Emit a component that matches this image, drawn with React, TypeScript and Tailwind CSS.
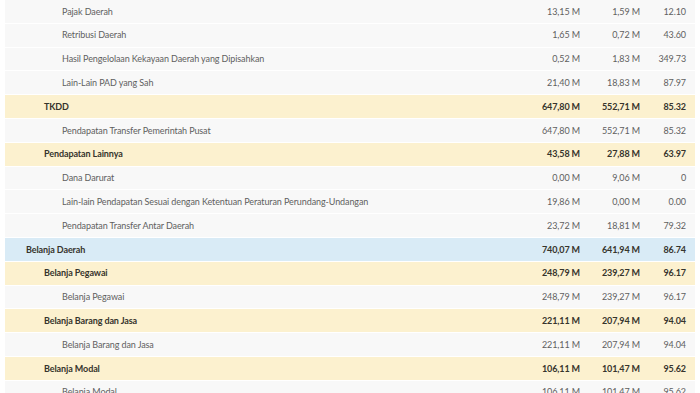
import React from "react";

type Row = {
  name: string;
  level: 1 | 2 | 3;
  a: string;
  b: string;
  p: string;
};

const rows: Row[] = [
  { name: "Pajak Daerah", level: 3, a: "13,15 M", b: "1,59 M", p: "12.10" },
  { name: "Retribusi Daerah", level: 3, a: "1,65 M", b: "0,72 M", p: "43.60" },
  { name: "Hasil Pengelolaan Kekayaan Daerah yang Dipisahkan", level: 3, a: "0,52 M", b: "1,83 M", p: "349.73" },
  { name: "Lain-Lain PAD yang Sah", level: 3, a: "21,40 M", b: "18,83 M", p: "87.97" },
  { name: "TKDD", level: 2, a: "647,80 M", b: "552,71 M", p: "85.32" },
  { name: "Pendapatan Transfer Pemerintah Pusat", level: 3, a: "647,80 M", b: "552,71 M", p: "85.32" },
  { name: "Pendapatan Lainnya", level: 2, a: "43,58 M", b: "27,88 M", p: "63.97" },
  { name: "Dana Darurat", level: 3, a: "0,00 M", b: "9,06 M", p: "0" },
  { name: "Lain-lain Pendapatan Sesuai dengan Ketentuan Peraturan Perundang-Undangan", level: 3, a: "19,86 M", b: "0,00 M", p: "0.00" },
  { name: "Pendapatan Transfer Antar Daerah", level: 3, a: "23,72 M", b: "18,81 M", p: "79.32" },
  { name: "Belanja Daerah", level: 1, a: "740,07 M", b: "641,94 M", p: "86.74" },
  { name: "Belanja Pegawai", level: 2, a: "248,79 M", b: "239,27 M", p: "96.17" },
  { name: "Belanja Pegawai", level: 3, a: "248,79 M", b: "239,27 M", p: "96.17" },
  { name: "Belanja Barang dan Jasa", level: 2, a: "221,11 M", b: "207,94 M", p: "94.04" },
  { name: "Belanja Barang dan Jasa", level: 3, a: "221,11 M", b: "207,94 M", p: "94.04" },
  { name: "Belanja Modal", level: 2, a: "106,11 M", b: "101,47 M", p: "95.62" },
  { name: "Belanja Modal", level: 3, a: "106,11 M", b: "101,47 M", p: "95.62" },
];

function TableRow({ row }: { row: Row }) {
  const bg =
    row.level === 1 ? "bg-[#d9ebf6]" : row.level === 2 ? "bg-[#fcf1cf]" : "bg-[#f8f8f8]";
  const text =
    row.level === 3 ? "text-[#5f5f5f] font-normal" : "text-[#36342c] font-bold";
  const indent =
    row.level === 1 ? "pl-[21px]" : row.level === 2 ? "pl-[39px]" : "pl-[57px]";

  return (
    <div className={`flex h-[23.8px] items-center border-b border-white text-[9px] tracking-[-0.1px] ${bg} ${text}`}>
      <div className={`flex-1 truncate ${indent}`}>{row.name}</div>
      <div className="w-[80px] pr-[9px] text-right">{row.a}</div>
      <div className="w-[60px] pr-[9px] text-right">{row.b}</div>
      <div className="w-[46px] pr-[9px] text-right">{row.p}</div>
    </div>
  );
}

export default function App() {
  return (
    <div className="h-[393px] w-[700px] overflow-hidden bg-white px-[5px] font-['Lato',sans-serif]">
      <div className="flex flex-col">
        {rows.map((row, i) => (
          <TableRow key={i} row={row} />
        ))}
      </div>
    </div>
  );
}
